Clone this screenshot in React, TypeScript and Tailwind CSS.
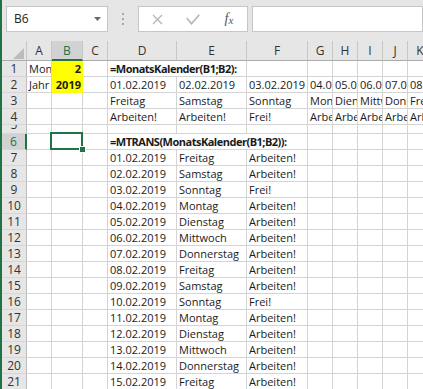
import React from "react";
import { clsx } from "clsx";
import { twMerge } from "tailwind-merge";

const cn = (...args: any[]) => twMerge(clsx(args));

type C = { v?: string; b?: boolean; r?: boolean; span?: 2 | 3; fill?: boolean; sel?: boolean };

const COLS = ["A", "B", "C", "D", "E", "F", "G", "H", "I", "J", "K", "L"];

const days: [string, string, string][] = [
  ["01.02.2019", "Freitag", "Arbeiten!"],
  ["02.02.2019", "Samstag", "Arbeiten!"],
  ["03.02.2019", "Sonntag", "Frei!"],
  ["04.02.2019", "Montag", "Arbeiten!"],
  ["05.02.2019", "Dienstag", "Arbeiten!"],
  ["06.02.2019", "Mittwoch", "Arbeiten!"],
  ["07.02.2019", "Donnerstag", "Arbeiten!"],
  ["08.02.2019", "Freitag", "Arbeiten!"],
  ["09.02.2019", "Samstag", "Arbeiten!"],
  ["10.02.2019", "Sonntag", "Frei!"],
  ["11.02.2019", "Montag", "Arbeiten!"],
  ["12.02.2019", "Dienstag", "Arbeiten!"],
  ["13.02.2019", "Mittwoch", "Arbeiten!"],
  ["14.02.2019", "Donnerstag", "Arbeiten!"],
  ["15.02.2019", "Freitag", "Arbeiten!"],
];

const blank = (n: number): C[] => Array.from({ length: n }, () => ({}));

// first row block: calendar laid out horizontally (D..K), L empty
const rowsTop: { n: number; cells: C[] }[] = [
  {
    n: 1,
    cells: [
      { v: "Monat" },
      { v: "2", b: true, r: true, fill: true },
      {},
      { v: "=MonatsKalender(B1;B2):", b: true, span: 2 },
      ...blank(7),
    ],
  },
  {
    n: 2,
    cells: [
      { v: "Jahr" },
      { v: "2019", b: true, r: true, fill: true },
      {},
      ...days.slice(0, 8).map((d) => ({ v: d[0] })),
      {},
    ],
  },
  { n: 3, cells: [{}, {}, {}, ...days.slice(0, 8).map((d) => ({ v: d[1] })), {}] },
  { n: 4, cells: [{}, {}, {}, ...days.slice(0, 8).map((d) => ({ v: d[2] })), {}] },
];

function GridCell({ c, short }: { c: C; short?: boolean }) {
  return (
    <div
      className={cn(
        "relative h-[16px] border-r border-b border-[#d4d4d4] text-[11px] leading-[15px] whitespace-nowrap text-[#1a1a1a]",
        !c.sel && "overflow-hidden",
        short && "h-[9px]",
        c.span === 2 && "col-span-2",
        c.span === 3 && "col-span-3",
        c.b && "font-bold",
        c.span && "tracking-[-0.5px]",
        c.r && "text-right",
        c.fill && "bg-[#ffff00] border-[#ffff00]"
      )}
    >
      <div className={cn("px-[2px]", c.r && "pr-[1px]")}>{c.v}</div>
      {c.sel && (
        <>
          <div className="absolute -left-[2px] -top-[2px] -right-[1px] -bottom-[1px] z-10 border-2 border-[#217346]" />
          <div className="absolute left-[28px] top-[13px] z-20 h-[5px] w-[5px] bg-[#217346] outline outline-1 outline-white" />
        </>
      )}
    </div>
  );
}

function RowHead({ n, short, sel }: { n: number; short?: boolean; sel?: boolean }) {
  return (
    <div
      className={cn(
        "h-[16px] overflow-hidden border-r border-b border-r-[#bdbdbd] border-b-[#d6d6d6] bg-[#e6e6e6] text-center text-[12px] leading-[15px] text-[#333]",
        short && "h-[9px]",
        sel && "border-r-2 border-r-[#217346] bg-[#d2d2d2] text-[#217346]"
      )}
    >
      <div className={cn(short && "-mt-[8px]")}>{n}</div>
    </div>
  );
}

function ColHead({ l, sel }: { l: string; sel?: boolean }) {
  return (
    <div
      className={cn(
        "h-[20px] border-r border-b border-r-[#c6c6c6] border-b-[#ababab] bg-[#e6e6e6] text-center text-[12px] leading-[19px] text-[#333]",
        sel && "border-b-2 border-b-[#217346] bg-[#d2d2d2] text-[#217346]"
      )}
    >
      {l}
    </div>
  );
}

function Row({ n, cells, short, sel }: { n: number; cells: C[]; short?: boolean; sel?: boolean }) {
  return (
    <>
      <RowHead n={n} short={short} sel={sel} />
      {cells.map((c, i) => (
        <GridCell key={i} c={c} short={short} />
      ))}
    </>
  );
}

function FormulaBar() {
  return (
    <div className="flex h-[41px] items-start bg-[#e6e6e6] pl-[4px] pt-[6px]">
      {/* name box */}
      <div className="flex h-[26px] w-[102px] items-center border border-[#c6c6c6] bg-white pl-[7px] pr-[6px] text-[12px] text-[#222]">
        <span>B6</span>
        <svg className="ml-auto" width="7" height="4" viewBox="0 0 7 4">
          <polygon points="0,0 7,0 3.5,4" fill="#6a6a6a" />
        </svg>
      </div>
      <div className="flex h-[26px] w-[30px] items-center justify-center">
        <svg width="2" height="12" viewBox="0 0 2 12">
          <rect x="0" y="0" width="2" height="2" fill="#a8a8a8" />
          <rect x="0" y="5" width="2" height="2" fill="#a8a8a8" />
          <rect x="0" y="10" width="2" height="2" fill="#a8a8a8" />
        </svg>
      </div>
      {/* cancel / enter / insert function */}
      <div className="flex h-[26px] w-[110px] items-center border border-[#c6c6c6] bg-white">
        <div className="flex w-[36px] justify-center">
          <svg width="11" height="11" viewBox="0 0 11 11">
            <path d="M1 1 L10 10 M10 1 L1 10" stroke="#b4b4b4" strokeWidth="1.3" fill="none" />
          </svg>
        </div>
        <div className="flex w-[36px] justify-center">
          <svg width="14" height="11" viewBox="0 0 14 11">
            <path d="M0.8 4 L5.5 9.8 L13.3 0.8" stroke="#b4b4b4" strokeWidth="1.6" fill="none" />
          </svg>
        </div>
        <div className="flex w-[36px] justify-center font-['Liberation_Serif',serif] text-[14px] italic leading-none text-[#555]">
          <span>f</span>
          <span className="text-[11px] mt-[3px]">x</span>
        </div>
      </div>
      <div className="ml-[4px] h-[26px] flex-1 border border-[#c6c6c6] bg-white" />
    </div>
  );
}

export default function App() {
  return (
    <div className="h-[389px] w-[423px] overflow-hidden border-l-2 border-[#217346] bg-white font-['Open_Sans',sans-serif]">
      <FormulaBar />
      <div className="grid w-max grid-cols-[25px_25px_31px_25px_69px_70px_61px_25px_25px_25px_25px_25px_60px]">
        {/* corner */}
        <div className="flex h-[20px] items-end justify-end border-r border-b border-r-[#c6c6c6] border-b-[#ababab] bg-[#e6e6e6] pb-[1px] pr-[2px]">
          <svg width="11" height="11" viewBox="0 0 11 11">
            <polygon points="11,0 11,11 0,11" fill="#bcbcbc" />
          </svg>
        </div>
        {COLS.map((l) => (
          <ColHead key={l} l={l} sel={l === "B"} />
        ))}

        {rowsTop.map((r) => (
          <Row key={r.n} n={r.n} cells={r.cells} />
        ))}
        <Row n={5} cells={blank(12)} short />
        <Row
          n={6}
          sel
          cells={[{}, { sel: true }, {}, { v: "=MTRANS(MonatsKalender(B1;B2)):", b: true, span: 3 }, ...blank(6)]}
        />
        {days.map((d, i) => (
          <Row key={i} n={i + 7} cells={[{}, {}, {}, { v: d[0] }, { v: d[1] }, { v: d[2] }, ...blank(6)]} />
        ))}
      </div>
    </div>
  );
}
